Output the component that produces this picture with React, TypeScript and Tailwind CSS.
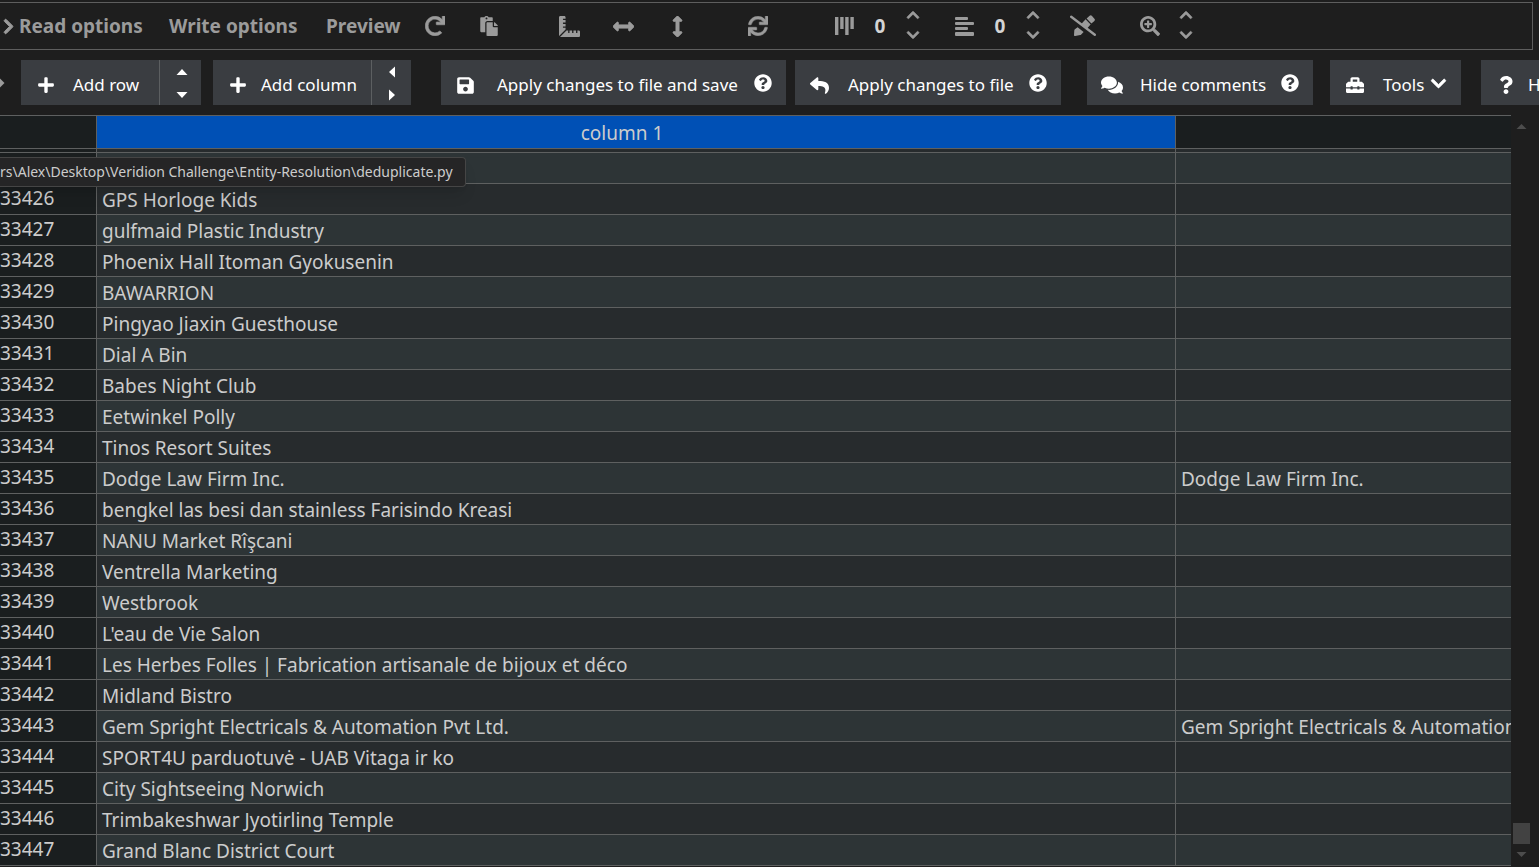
import type { ReactNode } from "react";
import {
  FaArrowsAltH,
  FaArrowsAltV,
  FaChevronDown,
  FaChevronRight,
  FaChevronUp,
  FaComments,
  FaPaste,
  FaPlus,
  FaQuestion,
  FaQuestionCircle,
  FaRedo,
  FaReply,
  FaRulerCombined,
  FaSave,
  FaSearchPlus,
  FaSync,
  FaToolbox,
} from "react-icons/fa";

type Row = { id: number; name: string; match?: string };

const names: string[] = [
  "GPS Horloge Kids",
  "gulfmaid Plastic Industry",
  "Phoenix Hall Itoman Gyokusenin",
  "BAWARRION",
  "Pingyao Jiaxin Guesthouse",
  "Dial A Bin",
  "Babes Night Club",
  "Eetwinkel Polly",
  "Tinos Resort Suites",
  "Dodge Law Firm Inc.",
  "bengkel las besi dan stainless Farisindo Kreasi",
  "NANU Market Rîşcani",
  "Ventrella Marketing",
  "Westbrook",
  "L'eau de Vie Salon",
  "Les Herbes Folles | Fabrication artisanale de bijoux et déco",
  "Midland Bistro",
  "Gem Spright Electricals & Automation Pvt Ltd.",
  "SPORT4U parduotuvė - UAB Vitaga ir ko",
  "City Sightseeing Norwich",
  "Trimbakeshwar Jyotirling Temple",
  "Grand Blanc District Court",
];

const matches: Record<number, string> = {
  33435: "Dodge Law Firm Inc.",
  33443: "Gem Spright Electricals & Automation Pvt Ltd.",
};

const rows: Row[] = names.map((name, i) => ({
  id: 33426 + i,
  name,
  match: matches[33426 + i],
}));

function IconButton({ label, className = "", children }: { label: string; className?: string; children: ReactNode }) {
  return (
    <button aria-label={label} className={`flex h-8 w-[30px] shrink-0 items-center justify-center ${className}`}>
      {children}
    </button>
  );
}

function Stepper({ label, className = "" }: { label: string; className?: string }) {
  return (
    <div className={`flex w-5 shrink-0 flex-col items-center gap-[6px] pb-[2px] ${className}`}>
      <button aria-label={`Increase ${label}`}>
        <FaChevronUp size={14} stroke="currentColor" strokeWidth={24} />
      </button>
      <button aria-label={`Decrease ${label}`}>
        <FaChevronDown size={14} stroke="currentColor" strokeWidth={24} />
      </button>
    </div>
  );
}

function CountInput({ label, className = "" }: { label: string; className?: string }) {
  return (
    <input
      aria-label={label}
      defaultValue="0"
      className={`w-[30px] shrink-0 bg-transparent text-center text-[19px] font-bold text-[#d4d4d4] outline-none ${className}`}
    />
  );
}

function ColumnsIcon() {
  return (
    <svg width="20" height="18" viewBox="0 0 20 18" fill="currentColor" aria-hidden="true">
      <rect x="0" y="0" width="3.4" height="18" />
      <rect x="5.2" y="0" width="3.4" height="12" />
      <rect x="10.2" y="0" width="3.4" height="18" />
      <rect x="15.4" y="0" width="3.4" height="12" />
    </svg>
  );
}

function RowsIcon() {
  return (
    <svg width="19" height="19" viewBox="0 0 19 19" fill="currentColor" aria-hidden="true">
      <rect x="0" y="0" width="13" height="3" rx="1" />
      <rect x="0" y="5" width="19" height="3" rx="1" />
      <rect x="0" y="10" width="13" height="3" rx="1" />
      <rect x="0" y="15" width="19" height="4" rx="1" />
    </svg>
  );
}

function PenSlashIcon() {
  return (
    <svg width="26" height="22" viewBox="0 0 26 22" fill="currentColor" aria-hidden="true">
      <path d="M16.6 3.4L19.6 0.8a1.6 1.6 0 0 1 2.2 0l2.6 2.9a1.6 1.6 0 0 1 0 2.2L21.4 8.6z" />
      <path d="M15.6 4.2L20.6 9.6l-4 4.4-5.8-4.6z" />
      <path d="M7.6 12.2l6 4.8-2.4 2.4a2 2 0 0 1-1 .6l-5 1a1 1 0 0 1-1.2-1.1l.3-4.4a2 2 0 0 1 .6-1.3z" />
      <path d="M1.2 1.8L24.8 19.8" stroke="currentColor" strokeWidth="2.4" strokeLinecap="round" />
    </svg>
  );
}

function Divider() {
  return <div className="w-px shrink-0 bg-[#5c5f61]" />;
}

const actionButton = "flex h-[45px] shrink-0 items-center bg-[#3a3d41] pt-[5px] whitespace-nowrap";

export default function App() {
  return (
    <div className="relative flex h-screen flex-col overflow-hidden bg-[#1e1e1e] font-['Noto_Sans','Open_Sans',sans-serif] text-[19px] text-[#cccccc]">
      <header className="mt-[2px] mr-[6px] flex h-12 shrink-0 items-center border-y border-r border-[#5e5e5e] text-[#9b9b9b]">
        <button className="flex w-[169px] shrink-0 items-center gap-[2px] font-bold whitespace-nowrap">
          <FaChevronRight size={17} stroke="currentColor" strokeWidth={28} />
          Read options
        </button>
        <button className="w-[157px] shrink-0 text-left font-bold whitespace-nowrap">Write options</button>
        <button className="w-[94px] shrink-0 text-left font-bold whitespace-nowrap">Preview</button>
        <IconButton label="Reload file">
          <FaRedo size={20} stroke="currentColor" strokeWidth={16} />
        </IconButton>
        <IconButton label="Paste" className="ml-6">
          <FaPaste size={20} />
        </IconButton>
        <IconButton label="Resize columns" className="ml-[50px]">
          <FaRulerCombined size={21} />
        </IconButton>
        <IconButton label="Fit width" className="ml-6">
          <FaArrowsAltH size={21} stroke="currentColor" strokeWidth={16} />
        </IconButton>
        <IconButton label="Fit height" className="ml-6">
          <FaArrowsAltV size={21} stroke="currentColor" strokeWidth={16} />
        </IconButton>
        <IconButton label="Sync" className="ml-[51px]">
          <FaSync size={20} stroke="currentColor" strokeWidth={12} />
        </IconButton>
        <IconButton label="Fixed columns" className="ml-[57px]">
          <ColumnsIcon />
        </IconButton>
        <CountInput label="Number of fixed columns" className="ml-[5px]" />
        <Stepper label="fixed columns" className="ml-2" />
        <IconButton label="Fixed rows" className="ml-[26px]">
          <RowsIcon />
        </IconButton>
        <CountInput label="Number of fixed rows" className="ml-[6px]" />
        <Stepper label="fixed rows" className="ml-2" />
        <IconButton label="Read-only" className="ml-[25px]">
          <PenSlashIcon />
        </IconButton>
        <IconButton label="Zoom" className="ml-[37px]">
          <FaSearchPlus size={20} />
        </IconButton>
        <Stepper label="zoom" className="ml-[11px]" />
      </header>

      <nav className="flex shrink-0 overflow-hidden py-[10px] text-[17px] text-white">
        <div className="flex w-[21px] shrink-0 items-center text-[#9b9b9b]">
          <svg width="5" height="10" viewBox="0 0 5 10" fill="currentColor" aria-hidden="true">
            <path d="M0 0.5L4.5 5L0 9.5z" />
          </svg>
        </div>
        <div className="flex h-[45px] shrink-0 bg-[#3a3d41]">
          <button className={`${actionButton} w-[138px] gap-[18px] pl-4`}>
            <FaPlus size={18} />
            Add row
          </button>
          <Divider />
          <div className="flex w-[41px] flex-col items-center justify-between pt-[9px] pb-[7px] pl-[2px]">
            <button aria-label="Insert row above">
              <svg width="12" height="6" viewBox="0 0 12 6" fill="currentColor" aria-hidden="true">
                <path d="M6 0L11.5 6H0.5z" />
              </svg>
            </button>
            <button aria-label="Insert row below">
              <svg width="12" height="6" viewBox="0 0 12 6" fill="currentColor" aria-hidden="true">
                <path d="M6 6L0.5 0H11.5z" />
              </svg>
            </button>
          </div>
        </div>
        <div className="ml-3 flex h-[45px] shrink-0 bg-[#3a3d41]">
          <button className={`${actionButton} w-[158px] gap-[14px] pl-4`}>
            <FaPlus size={18} />
            Add column
          </button>
          <Divider />
          <div className="flex w-[39px] flex-col items-center justify-between pt-[6px] pb-1">
            <button aria-label="Insert column left">
              <svg width="6" height="12" viewBox="0 0 6 12" fill="currentColor" aria-hidden="true">
                <path d="M0 6L6 0.5V11.5z" />
              </svg>
            </button>
            <button aria-label="Insert column right">
              <svg width="6" height="12" viewBox="0 0 6 12" fill="currentColor" aria-hidden="true">
                <path d="M6 6L0 0.5V11.5z" />
              </svg>
            </button>
          </div>
        </div>
        <button className={`${actionButton} ml-[30px] w-[345px] pl-[15px]`}>
          <FaSave size={19} />
          <span className="ml-[22px]">Apply changes to file and save</span>
          <FaQuestionCircle size={18} className="mr-[14px] mb-1 ml-auto" />
        </button>
        <button className={`${actionButton} ml-[9px] w-[266px] pl-[15px]`}>
          <FaReply size={19} />
          <span className="ml-[19px]">Apply changes to file</span>
          <FaQuestionCircle size={18} className="mr-[14px] mb-1 ml-auto" />
        </button>
        <button className={`${actionButton} ml-[26px] w-[226px] pl-[14px]`}>
          <FaComments size={22} />
          <span className="ml-[17px]">Hide comments</span>
          <FaQuestionCircle size={18} className="mr-[14px] mb-1 ml-auto" />
        </button>
        <button className={`${actionButton} ml-[17px] w-[131px] pl-4`}>
          <FaToolbox size={18} />
          <span className="ml-[19px]">Tools</span>
          <FaChevronDown size={17} stroke="currentColor" strokeWidth={20} className="mr-[14px] mb-1 ml-auto" />
        </button>
        <button className={`${actionButton} ml-5 w-[131px] pl-4`}>
          <FaQuestion size={18} />
          <span className="ml-[13px]">Help</span>
        </button>
      </nav>

      <main className="flex min-h-0 flex-1">
        <div className="min-w-0 flex-1 overflow-hidden">
          <table className="w-full table-fixed border-separate border-spacing-0">
            <colgroup>
              <col className="w-[97px]" />
              <col className="w-[1079px]" />
              <col />
            </colgroup>
            <thead>
              <tr className="h-[34px]">
                <th aria-label="Row" className="border-y border-r border-[#5e6060] bg-[#1a1e1f] p-0" />
                <th className="border-y border-r border-[#5e6060] bg-[#0050b5] p-0 pt-[2px] pr-7 text-center text-[19px]/6 font-normal">
                  column 1
                </th>
                <th aria-label="column 2" className="border-y border-[#5e6060] bg-[#1a1e1f] p-0" />
              </tr>
            </thead>
            <tbody>
              <tr className="h-1" aria-hidden="true">
                <td className="border-r border-b border-[#5e6060] bg-[#1a1e1f] p-0" />
                <td className="border-r border-b border-[#5e6060] bg-[#272b2d] p-0" />
                <td className="border-b border-[#5e6060] bg-[#272b2d] p-0" />
              </tr>
              <tr className="h-[31px] bg-[#2d3436]">
                <th aria-label="33425" className="border-r border-b border-[#5e6060] bg-[#1a1e1f] p-0" />
                <td className="border-r border-b border-[#5e6060] p-0" />
                <td className="border-b border-[#5e6060] p-0" />
              </tr>
              {rows.map((row) => (
                <tr key={row.id} className="h-[31px] odd:bg-[#272b2d] even:bg-[#2d3436]">
                  <th className="border-r border-b border-[#5e6060] bg-[#1a1e1f] p-0 pb-[2px] text-left text-[19px]/6 font-normal">
                    {row.id}
                  </th>
                  <td className="overflow-hidden border-r border-b border-[#5e6060] p-0 pt-[2px] pl-[5px] text-[19px]/6 whitespace-nowrap">
                    {row.name}
                  </td>
                  <td className="overflow-hidden border-b border-[#5e6060] p-0 pt-[2px] pl-[5px] text-[19px]/6 whitespace-nowrap">
                    {row.match}
                  </td>
                </tr>
              ))}
            </tbody>
          </table>
        </div>
        <div className="flex w-7 shrink-0 flex-col items-start pt-[9px] pb-[10px] pl-[2px]">
          <svg width="17" height="5" viewBox="0 0 17 5" fill="#4d4d4d" aria-hidden="true">
            <path d="M8.5 0L13.5 5H3.5z" />
          </svg>
          <div className="mt-auto h-[21px] w-[17px] bg-[#424242]" />
          <svg width="17" height="5" viewBox="0 0 17 5" fill="#4d4d4d" aria-hidden="true" className="mt-2">
            <path d="M8.5 5L3.5 0H13.5z" />
          </svg>
        </div>
      </main>

      <div
        role="tooltip"
        className="absolute top-[157px] left-0 h-[30px] rounded-r-[4px] border-y border-r border-[#454545] bg-[#252526] pr-3 text-sm/7 whitespace-nowrap shadow-lg"
      >
        {"rs\\Alex\\Desktop\\Veridion Challenge\\Entity-Resolution\\deduplicate.py"}
      </div>
    </div>
  );
}
